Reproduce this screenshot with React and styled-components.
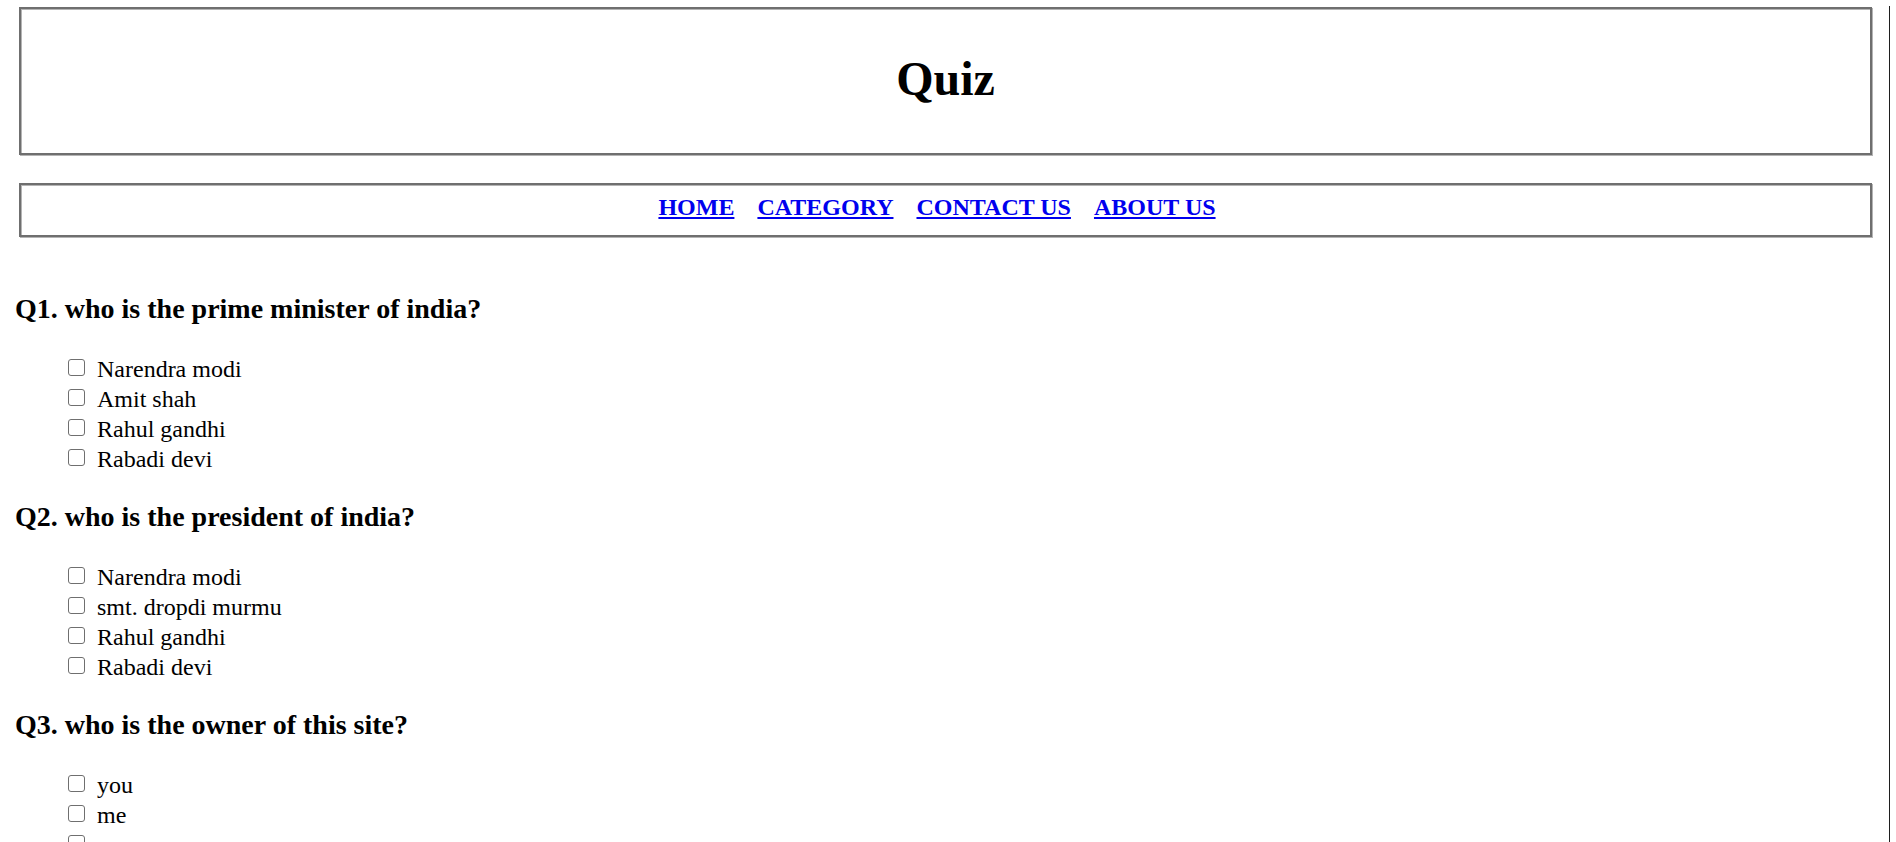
import { createGlobalStyle, styled } from 'styled-components'

const GlobalStyle = createGlobalStyle`
  html, body {
    margin: 0;
    padding: 0;
    background: #fff;
  }
  body {
    font-family: "Liberation Serif", "Times New Roman", serif;
    color: #000;
  }
`

const Page = styled.div`
  display: flex;
  flex-direction: column;
  min-height: 842px;
`

const Boxes = styled.div`
  display: flex;
  flex-direction: column;
  gap: 28px;
  margin: 7px 24px 0 19px;
`

const Framed = styled.div`
  border: 2px solid #6f6f6f;
  box-shadow: inset 1px 1px 0 #b4b4b4, 1px 1px 0 #b4b4b4;
`

const TitleBox = styled(Framed)`
  padding: 42px 0 47px;
  text-align: center;
  h1 {
    margin: 0;
    font-size: 48px;
    line-height: 55px;
    font-weight: bold;
  }
`

const NavBox = styled(Framed)`
  display: flex;
  justify-content: center;
  gap: 23px;
  padding: 8px 17px 14px 0;
`

const NavLink = styled.a`
  font-size: 24px;
  line-height: 28px;
  font-weight: bold;
  color: #0000ee;
  text-decoration: underline;
  text-underline-offset: 2px;
`

const Quiz = styled.div`
  display: flex;
  flex-direction: column;
  padding: 56px 0 0 15px;
`

const Question = styled.section`
  display: flex;
  flex-direction: column;
  padding-bottom: 27px;
`

const Heading = styled.h3`
  margin: 0 0 29px;
  font-size: 28px;
  line-height: 32px;
  font-weight: bold;
`

const Options = styled.ul`
  list-style: none;
  margin: 0;
  padding: 0 0 0 53px;
`

const Option = styled.li`
  font-size: 24px;
  line-height: 30px;
  height: 30px;
  white-space: nowrap;
`

const Check = styled.input.attrs({ type: 'checkbox' })`
  appearance: none;
  display: inline-block;
  box-sizing: border-box;
  width: 17px;
  height: 17px;
  margin: 0 12px 1px 0;
  border: 1.5px solid #6f6f6f;
  border-radius: 3px;
  background: #fff;
  vertical-align: baseline;
`

// thin dark line along the right side of the window
const Edge = styled.div`
  position: fixed;
  top: 6px;
  bottom: 0;
  left: 1889px;
  width: 1px;
  background: #1e1e1e;
`

const questions = [
  {
    q: 'Q1. who is the prime minister of india?',
    options: ['Narendra modi', 'Amit shah', 'Rahul gandhi', 'Rabadi devi'],
  },
  {
    q: 'Q2. who is the president of india?',
    options: ['Narendra modi', 'smt. dropdi murmu', 'Rahul gandhi', 'Rabadi devi'],
  },
  {
    q: 'Q3. who is the owner of this site?',
    options: ['you', 'me', 'none', 'us'],
  },
]

const App = () => {
  return (
    <Page>
      <GlobalStyle />
      <Boxes>
        <TitleBox>
          <h1>Quiz</h1>
        </TitleBox>
        <NavBox>
          <NavLink href="#">HOME</NavLink>
          <NavLink href="#">CATEGORY</NavLink>
          <NavLink href="#">CONTACT US</NavLink>
          <NavLink href="#">ABOUT US</NavLink>
        </NavBox>
      </Boxes>
      <Quiz>
        {questions.map((item) => (
          <Question key={item.q}>
            <Heading>{item.q}</Heading>
            <Options>
              {item.options.map((opt) => (
                <Option key={opt}>
                  <label>
                    <Check />
                    {opt}
                  </label>
                </Option>
              ))}
            </Options>
          </Question>
        ))}
      </Quiz>
      <Edge />
    </Page>
  )
}

export default App
